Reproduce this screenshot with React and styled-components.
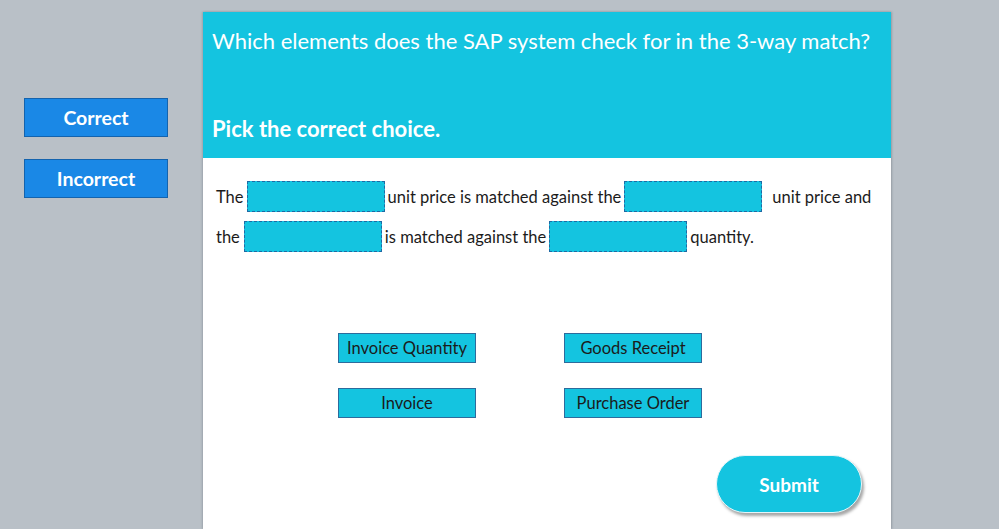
import React from "react";
import styled, { createGlobalStyle } from "styled-components";

const Global = createGlobalStyle`
  html, body { margin: 0; padding: 0; background: #b9c0c7; }
  body { font-family: Lato, "Open Sans", sans-serif; width: 999px; height: 529px; overflow: hidden; }
`;

const Page = styled.div`
  display: flex;
  align-items: flex-start;
  height: 529px;
`;

const Side = styled.div`
  width: 203px;
  padding: 98px 0 0 24px;
  box-sizing: border-box;
  display: flex;
  flex-direction: column;
  gap: 22px;
`;

const FeedbackButton = styled.div`
  width: 144px;
  height: 39px;
  box-sizing: border-box;
  background: #1a88e6;
  border: 1px solid #1463ad;
  color: #fff;
  font-weight: 700;
  font-size: 19.5px;
  display: flex;
  align-items: center;
  justify-content: center;
`;

const Card = styled.div`
  margin-top: 12px;
  width: 688px;
  height: 517px;
  background: #fff;
  box-shadow: 1px 0 2px rgba(80, 90, 100, 0.35), -1px 0 2px rgba(80, 90, 100, 0.25);
  display: flex;
  flex-direction: column;
`;

const Header = styled.div`
  background: #14c4e0;
  height: 146px;
  box-sizing: border-box;
  padding: 15px 9px 0 9px;
  color: #fff;
  display: flex;
  flex-direction: column;
`;

const Title = styled.div`
  font-size: 22px;
  line-height: 28px;
`;

const Instruction = styled.div`
  margin-top: 60px;
  font-size: 22px;
  font-weight: 700;
  line-height: 28px;
`;

const Body = styled.div`
  padding: 23px 0 0 13px;
  display: flex;
  flex-direction: column;
  gap: 9px;
  flex: 1;
`;

const Line = styled.div`
  display: flex;
  align-items: center;
  height: 31px;
  font-size: 16.5px;
  color: #1b1b1b;
  white-space: pre;
`;

const Blank = styled.span`
  display: inline-block;
  width: 138px;
  height: 31px;
  box-sizing: border-box;
  background: #14c4e0;
  border: 1px dashed #1f6aa5;
  margin: 0 ${(p) => p.$mr || 3}px 0 ${(p) => p.$ml || 3}px;
`;

const Choices = styled.div`
  margin: 72px 0 0 122px;
  display: grid;
  grid-template-columns: 138px 138px;
  column-gap: 88px;
  row-gap: 25px;
`;

const Choice = styled.div`
  height: 30px;
  box-sizing: border-box;
  background: #14c4e0;
  border: 1px solid #2d6b9c;
  display: flex;
  align-items: center;
  justify-content: center;
  font-size: 16.5px;
  color: #1b1b1b;
`;

const SubmitRow = styled.div`
  margin-top: 28px;
  padding-left: 500px;
`;

const Submit = styled.div`
  width: 146px;
  height: 58px;
  border-radius: 29px;
  background: #14c4e0;
  border: 1px solid #e6f6f9;
  box-sizing: border-box;
  box-shadow: 2px 3px 3px rgba(0, 0, 0, 0.35);
  color: #fff;
  font-weight: 700;
  font-size: 19px;
  display: flex;
  align-items: center;
  justify-content: center;
`;

export default function App() {
  return (
    <>
      <Global />
      <Page>
        <Side>
          <FeedbackButton>Correct</FeedbackButton>
          <FeedbackButton>Incorrect</FeedbackButton>
        </Side>
        <Card>
          <Header>
            <Title>Which elements does the SAP system check for in the 3-way match?</Title>
            <Instruction>Pick the correct choice.</Instruction>
          </Header>
          <Body>
            <Line>
              The<Blank />unit price is matched against the<Blank $mr={10} />unit price and
            </Line>
            <Line>
              the<Blank $ml={4} />is matched against the<Blank />quantity.
            </Line>
            <Choices>
              <Choice>Invoice Quantity</Choice>
              <Choice>Goods Receipt</Choice>
              <Choice>Invoice</Choice>
              <Choice>Purchase Order</Choice>
            </Choices>
            <SubmitRow>
              <Submit>Submit</Submit>
            </SubmitRow>
          </Body>
        </Card>
      </Page>
    </>
  );
}
